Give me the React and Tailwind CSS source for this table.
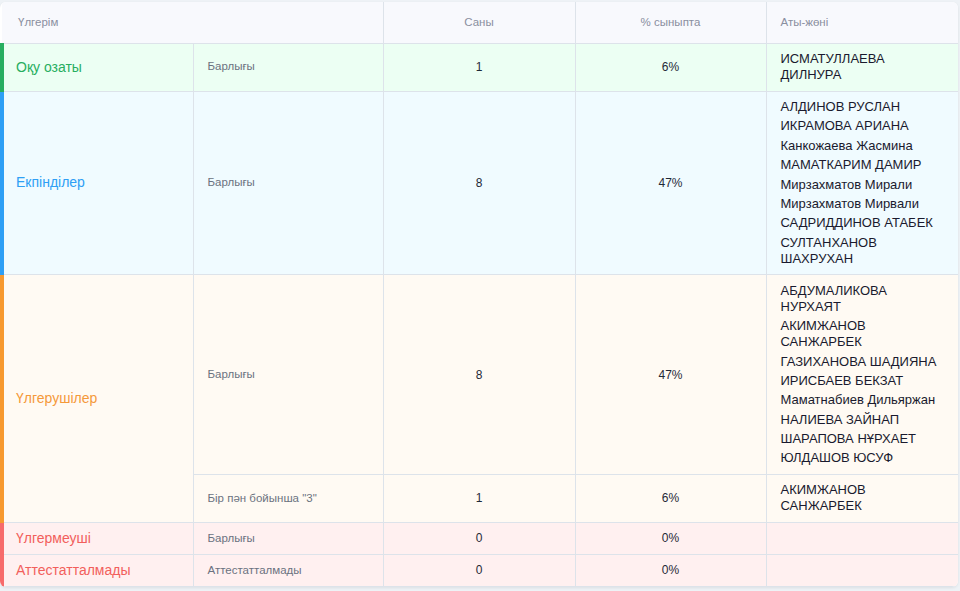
import React from 'react';

const groups = [
  {
    label: 'Оқу озаты',
    bar: 'border-l-[#27ae60]',
    text: 'text-[#27ae60]',
    bg: 'bg-[#ecfff3]',
    rows: [{ sub: 'Барлығы', count: 1, pct: '6%', names: ['ИСМАТУЛЛАЕВА ДИЛНУРА'] }],
  },
  {
    label: 'Екпінділер',
    bar: 'border-l-[#2e9ff5]',
    text: 'text-[#2e9ff5]',
    bg: 'bg-[#f0fbff]',
    rows: [
      {
        sub: 'Барлығы',
        count: 8,
        pct: '47%',
        names: [
          'АЛДИНОВ РУСЛАН',
          'ИКРАМОВА АРИАНА',
          'Канкожаева Жасмина',
          'МАМАТКАРИМ ДАМИР',
          'Мирзахматов Мирали',
          'Мирзахматов Мирвали',
          'САДРИДДИНОВ АТАБЕК',
          'СУЛТАНХАНОВ ШАХРУХАН',
        ],
      },
    ],
  },
  {
    label: 'Үлгерушілер',
    bar: 'border-l-[#f7992f]',
    text: 'text-[#f5993a]',
    bg: 'bg-[#fffaf3]',
    rows: [
      {
        sub: 'Барлығы',
        count: 8,
        pct: '47%',
        names: [
          'АБДУМАЛИКОВА НУРХАЯТ',
          'АКИМЖАНОВ САНЖАРБЕК',
          'ГАЗИХАНОВА ШАДИЯНА',
          'ИРИСБАЕВ БЕКЗАТ',
          'Маматнабиев Дильяржан',
          'НАЛИЕВА ЗАЙНАП',
          'ШАРАПОВА НҰРХАЕТ',
          'ЮЛДАШОВ ЮСУФ',
        ],
      },
      { sub: 'Бір пән бойынша "3"', count: 1, pct: '6%', names: ['АКИМЖАНОВ САНЖАРБЕК'] },
    ],
  },
  {
    label: 'Үлгермеуші',
    bar: 'border-l-[#f76b6b]',
    text: 'text-[#f25f5c]',
    bg: 'bg-[#fff0f0]',
    rows: [{ sub: 'Барлығы', count: 0, pct: '0%', names: [] }],
  },
  {
    label: 'Аттестатталмады',
    bar: 'border-l-[#f76b6b]',
    text: 'text-[#f25f5c]',
    bg: 'bg-[#fff0f0]',
    rows: [{ sub: 'Аттестатталмады', count: 0, pct: '0%', names: [] }],
  },
];

const cell = 'border border-[#dde3ea]';

export default function App() {
  return (
    <div
      className="min-h-[591px] bg-[#eef2f6] pt-[2px] pr-[2px]"
      style={{ fontFamily: '"Liberation Sans", Arial, sans-serif' }}
    >
      <div className="overflow-hidden rounded-md bg-white shadow-[0_1px_3px_rgba(0,0,0,0.08)]">
        <table className="w-full table-fixed border-collapse">
          <colgroup>
            <col className="w-[191px]" />
            <col className="w-[190px]" />
            <col className="w-[192px]" />
            <col className="w-[191px]" />
            <col />
          </colgroup>
          <thead>
            <tr className="h-[41px] bg-[#f8f9fd] text-[11.5px] text-[#8a8fa0]">
              <th colSpan={2} className={`${cell} border-t-0 border-l-0 px-4 text-left font-normal`}>Үлгерім</th>
              <th className={`${cell} border-t-0 text-center font-normal`}>Саны</th>
              <th className={`${cell} border-t-0 text-center font-normal`}>% сыныпта</th>
              <th className={`${cell} border-t-0 border-r-0 px-3.5 text-left font-normal`}>Аты-жөні</th>
            </tr>
          </thead>
          <tbody>
            {groups.map((g) =>
              g.rows.map((r, i) => (
                <tr key={g.label + i} className={g.bg}>
                  {i === 0 && (
                    <td
                      rowSpan={g.rows.length}
                      className={`${cell} border-l-4 ${g.bar} pl-3 align-middle text-[14px] ${g.text}`}
                    >
                      {g.label}
                    </td>
                  )}
                  <td className={`${cell} px-3.5 text-[11.5px] text-[#6b7280]`}>{r.sub}</td>
                  <td className={`${cell} text-center text-[12px] text-[#1f2937]`}>{r.count}</td>
                  <td className={`${cell} text-center text-[12px] text-[#1f2937]`}>{r.pct}</td>
                  <td className={`${cell} border-r-0 px-3.5 py-[7.5px] text-[13px] leading-4 text-[#1a1a2e]`}>
                    <div className="flex min-h-4 flex-col gap-[3.4px]">
                      {r.names.map((n) => (
                        <div key={n}>{n}</div>
                      ))}
                    </div>
                  </td>
                </tr>
              ))
            )}
          </tbody>
        </table>
      </div>
    </div>
  );
}
